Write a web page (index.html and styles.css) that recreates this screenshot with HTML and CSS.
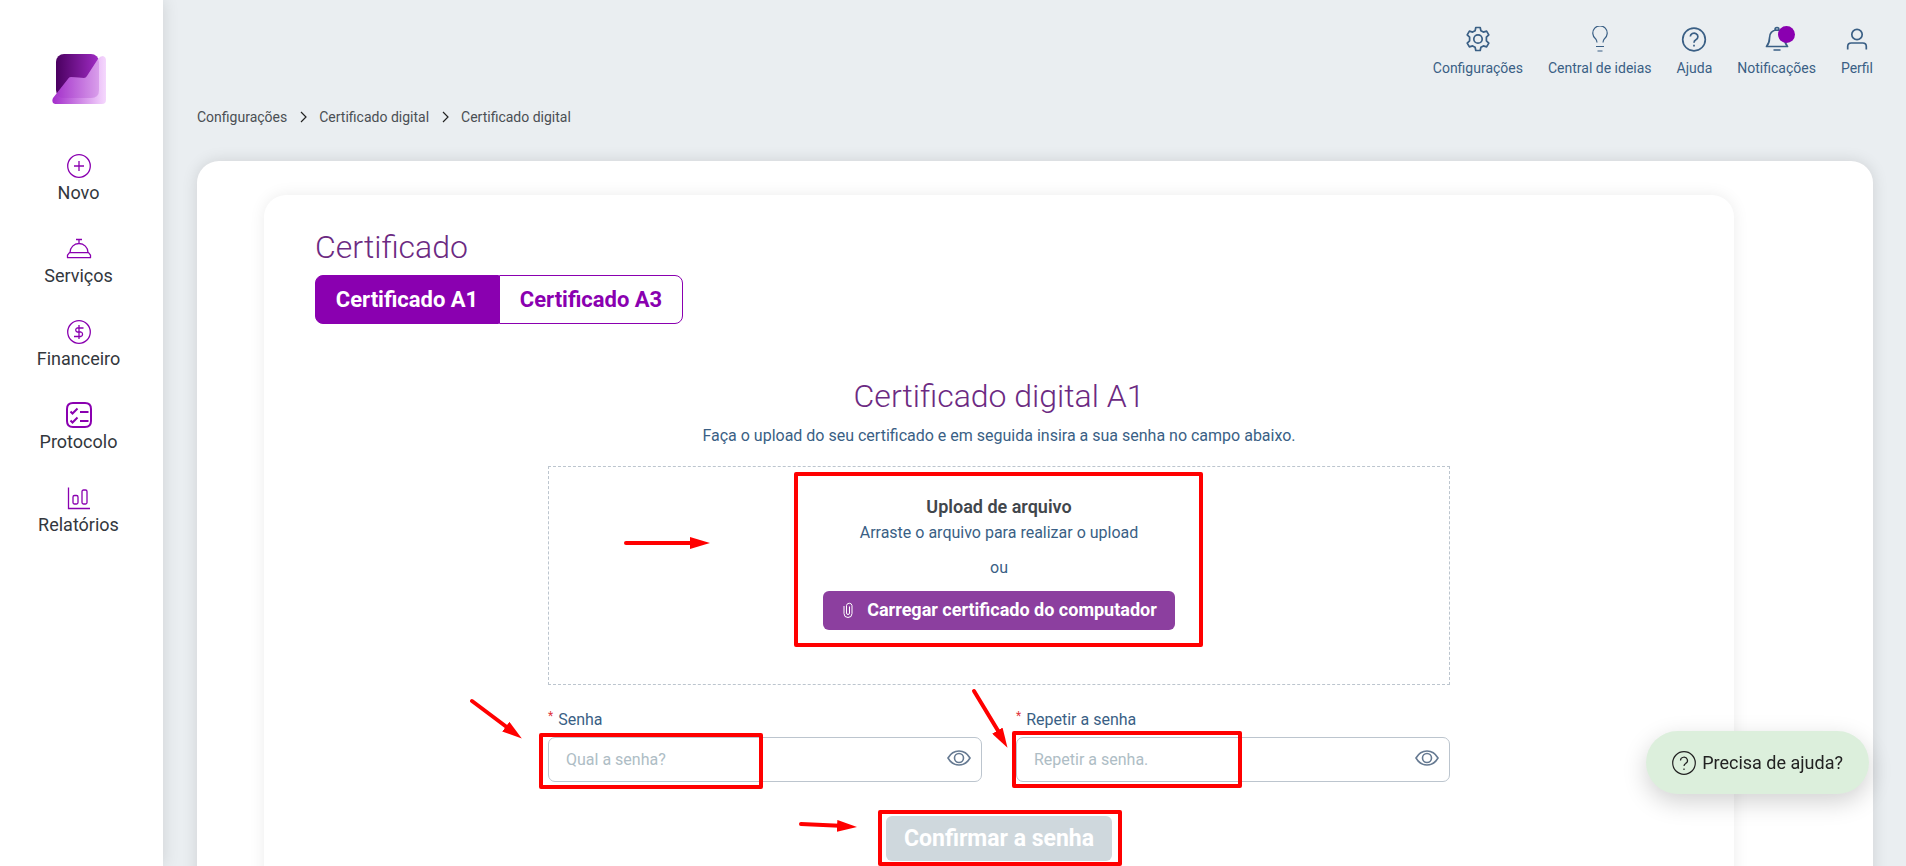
FILE: index.html
```html
<!DOCTYPE html>
<html lang="pt-BR">

<head>
    <meta charset="UTF-8" />
    <meta name="viewport" content="width=device-width, initial-scale=1" />
    <title>Certificado digital</title>
    <link rel="stylesheet" href="styles.css">
</head>

<body>
    <div class="app">

        <aside class="sidebar">
            <a href="#" class="logo" aria-label="Início">
                <svg width="54" height="50" viewBox="0 0 54 50">
                    <defs>
                        <linearGradient id="logoDark" x1="0" y1="0" x2="1" y2="0">
                            <stop offset="0" stop-color="#4a0060" />
                            <stop offset="1" stop-color="#a02cc4" />
                        </linearGradient>
                        <linearGradient id="logoLight" x1="0" y1="0" x2="1" y2="0">
                            <stop offset="0" stop-color="#a32ccb" />
                            <stop offset="0.9" stop-color="#efc9fa" />
                            <stop offset="1" stop-color="#f5d8fd" />
                        </linearGradient>
                    </defs>
                    <rect x="4" y="0" width="43" height="44" rx="8" fill="url(#logoDark)" />
                    <path d="M1 44 L16 25 Q17 23 19 23 L32 24 Q34 24 35 22 L46 5 Q48 2 51 2 Q54 3 54 6 V46 Q54 50 50 50 H3 Q-1 49 1 44Z" fill="url(#logoLight)" />
                    <path d="M5 39 L16 25 Q17 23 19 23 L32 24 Q34 24 35 22 L46 5 L47 8 V36 Q47 44 39 44 H12 Q6 44 5 39Z" fill="#a030c4" opacity="0.25" />
                </svg>
            </a>
            <nav class="menu">
                <a href="#novo">
                    <svg width="26" height="26" viewBox="0 0 26 26">
                        <circle cx="13" cy="13" r="11.3" />
                        <path d="M13 8v10M8 13h10" />
                    </svg>
                    <span>Novo</span>
                </a>
                <a href="#servicos">
                    <svg width="26" height="26" viewBox="0 0 26 26">
                        <path d="M10 3.500h6M13 3.500v4M4 16.500a9 9 0 0 1 18 0" />
                        <path d="M3.500 16.700h19l2 2.500v2.500h-23v-2.500z" stroke-linejoin="round" />
                    </svg>
                    <span>Serviços</span>
                </a>
                <a href="#financeiro">
                    <svg width="26" height="26" viewBox="0 0 26 26">
                        <circle cx="13" cy="13" r="11.3" />
                        <path d="M13 6v14M17.500 9h-6.500a2.200 2.200 0 0 0 0 4h4a2.400 2.400 0 0 1 0 4.500h-7" />
                    </svg>
                    <span>Financeiro</span>
                </a>
                <a href="#protocolo">
                    <svg width="26" height="26" viewBox="0 0 26 26" class="bold">
                        <path d="M7 1h12q6 0 6 6v12q0 6-6 6h-12q-6 0-6-6v-12q0-6 6-6z" />
                        <path d="M4.500 9.500l2 2 5-5M4.500 18.500l2 2 5-5M14 10h8.500M14 19h8.500" />
                    </svg>
                    <span>Protocolo</span>
                </a>
                <a href="#relatorios">
                    <svg width="26" height="26" viewBox="0 0 26 26">
                        <path d="M2.500 2.500v21h21.500" />
                        <rect x="7" y="10.500" width="5" height="8.500" rx="1.500" />
                        <rect x="16" y="5" width="5" height="14" rx="1.500" />
                    </svg>
                    <span>Relatórios</span>
                </a>
            </nav>
        </aside>

        <main class="main">
            <header class="topbar">
                <a href="#config">
                    <svg width="26" height="26" viewBox="0 0 26 26">
                        <path d="M10.800 1.500h4.400l.7 3.200 2.500 1.400 3.200-1 2.200 3.800-2.400 2.300v3.600l2.400 2.300-2.200 3.800-3.200-1-2.500 1.400-.7 3.200h-4.400l-.7-3.200-2.500-1.400-3.200 1-2.200-3.800 2.400-2.300v-3.600l-2.400-2.300 2.200-3.800 3.200 1 2.500-1.400z" stroke-linejoin="round" />
                        <circle cx="13" cy="13" r="4.200" />
                    </svg>
                    <span>Configurações</span>
                </a>
                <a href="#ideias">
                    <svg width="26" height="26" viewBox="0 0 26 26" class="thin">
                        <path d="M10 16.500q0-2-1.500-3.800a7.200 7.200 0 1 1 9 0q-1.500 1.800-1.500 3.800M9 20.500h8M10.500 25h5" />
                    </svg>
                    <span>Central de ideias</span>
                </a>
                <a href="#ajuda">
                    <svg width="26" height="26" viewBox="0 0 26 26">
                        <circle cx="13" cy="13.500" r="11.300" />
                        <path d="M9.300 10.500a3.800 3.500 0 1 1 5.600 3.200q-1.900 1-1.900 3M13 18.700v1.800" />
                    </svg>
                    <span>Ajuda</span>
                </a>
                <a href="#notificacoes" class="bell">
                    <svg width="26" height="26" viewBox="0 0 26 26">
                        <path d="M2.500 20.500q3-3.500 3-8.500 0-7.500 7.500-8 7.500.5 7.500 8 0 5 3 8.500zM9.500 24h7M11 4q0-2.500 2-2.500t2 2.500" stroke-linejoin="round" />
                    </svg>
                    <i class="dot"></i>
                    <span>Notificações</span>
                </a>
                <a href="#perfil">
                    <svg width="26" height="26" viewBox="0 0 26 26">
                        <circle cx="13" cy="8.500" r="5.200" />
                        <path d="M3.700 23.500v-3q0-3.500 3.500-3.500h11.600q3.500 0 3.500 3.500v3" />
                    </svg>
                    <span>Perfil</span>
                </a>
            </header>

            <nav class="breadcrumb">
                <a href="#config">Configurações</a>
                <svg width="8" height="12" viewBox="0 0 8 12"><path d="M2 1l5 5-5 5" /></svg>
                <a href="#certificado">Certificado digital</a>
                <svg width="8" height="12" viewBox="0 0 8 12"><path d="M2 1l5 5-5 5" /></svg>
                <span>Certificado digital</span>
            </nav>

            <div class="card">
                <section class="panel">
                    <h1>Certificado</h1>
                    <div class="tabs">
                        <button type="button" class="active">Certificado A1</button>
                        <button type="button">Certificado A3</button>
                    </div>

                    <h2>Certificado digital A1</h2>
                    <p class="intro">Faça o upload do seu certificado e em seguida insira a sua senha no campo abaixo.</p>

                    <form class="form">
                        <div class="dropzone">
                            <strong>Upload de arquivo</strong>
                            <p>Arraste o arquivo para realizar o upload</p>
                            <p class="or">ou</p>
                            <button type="button" class="upload">
                                <svg width="10" height="16" viewBox="0 0 10 16"><path d="M1 4v7.500a4 4 0 0 0 8 0v-8a2.800 2.800 0 0 0-5.500 0v7.500a1.500 1.500 0 0 0 3 0v-6.500" /></svg>
                                Carregar certificado do computador
                            </button>
                        </div>

                        <div class="fields">
                            <div class="field">
                                <label for="senha"><sup>*</sup>Senha</label>
                                <div class="input">
                                    <input type="password" id="senha" placeholder="Qual a senha?">
                                    <button type="button" aria-label="Mostrar senha">
                                        <svg width="24" height="18" viewBox="0 0 24 18"><path d="M1 9Q5 2 12 2t11 7q-4 7-11 7T1 9z" /><circle cx="12" cy="9" r="4.500" /></svg>
                                    </button>
                                </div>
                            </div>
                            <div class="field">
                                <label for="repetir"><sup>*</sup>Repetir a senha</label>
                                <div class="input">
                                    <input type="password" id="repetir" placeholder="Repetir a senha.">
                                    <button type="button" aria-label="Mostrar senha">
                                        <svg width="24" height="18" viewBox="0 0 24 18"><path d="M1 9Q5 2 12 2t11 7q-4 7-11 7T1 9z" /><circle cx="12" cy="9" r="4.500" /></svg>
                                    </button>
                                </div>
                            </div>
                        </div>

                        <button type="submit" class="confirm" disabled>Confirmar a senha</button>

                        <!-- tutorial marks over the form -->
                        <svg class="marks" width="902" height="400" viewBox="0 0 902 400">
                            <defs>
                                <marker id="head" markerUnits="userSpaceOnUse" markerWidth="20" markerHeight="12" refX="19" refY="6" orient="auto">
                                    <path d="M0 0L20 6L0 12z" fill="#f00" />
                                </marker>
                            </defs>
                            <g class="boxes">
                                <rect x="248" y="8" width="405" height="171" />
                                <rect x="-7" y="269" width="220" height="52" />
                                <rect x="466" y="267" width="226" height="53" />
                                <rect x="332" y="346" width="240" height="52" />
                            </g>
                            <g class="lines">
                                <path d="M78 77h68" />
                                <path d="M-76 235l36 27" />
                                <path d="M426 225l26 43" />
                                <path d="M253 358l44 2" />
                            </g>
                            <g class="heads">
                                <path d="M142 77h19" marker-end="url(#head)" />
                                <path d="M-43 260l16 12" marker-end="url(#head)" />
                                <path d="M449 264l10 17" marker-end="url(#head)" />
                                <path d="M290 360l18 1" marker-end="url(#head)" />
                            </g>
                        </svg>
                    </form>
                </section>
            </div>
        </main>

        <button type="button" class="help">
            <svg width="24" height="24" viewBox="0 0 24 24">
                <circle cx="12" cy="12" r="11.300" />
                <path d="M8.500 9.500a3.500 3.300 0 1 1 5.200 2.900q-1.700 1-1.700 2.600M12 17.500v1.500" />
            </svg>
            Precisa de ajuda?
        </button>
    </div>
</body>

</html>
```
FILE: styles.css
```css
:root {
    --purple: #8a00b0;
    --title: #6c2a82;
    --blue: #3a5f85;
    --text: #33373d;
    --bg: #eaeef1;
    --border: #bcc5ce;
    --red: #f00;
}

* {
    box-sizing: border-box;
}

body {
    margin: 0;
    font-family: Roboto, sans-serif;
    font-size: 16px;
    color: var(--text);
    background: var(--bg);
}

a {
    color: inherit;
    text-decoration: none;
}

button,
input {
    font-family: inherit;
}

svg {
    display: block;
    fill: none;
    flex-shrink: 0;
}

h1,
h2,
p {
    margin: 0;
}

.app {
    display: flex;
    height: 100vh;
    overflow: hidden;
}

/* sidebar */
.sidebar {
    width: 163px;
    flex-shrink: 0;
    padding: 54px 6px 0 0;
    background: #fff;
    box-shadow: 0 0 16px rgba(0, 0, 0, 0.12);
    display: flex;
    flex-direction: column;
    align-items: center;
}

.menu {
    margin-top: 49px;
    display: flex;
    flex-direction: column;
    gap: 31px;
}

.menu a {
    display: flex;
    flex-direction: column;
    align-items: center;
    gap: 2px;
    font-size: 18px;
    line-height: 24px;
}

.menu svg {
    stroke: var(--purple);
    stroke-width: 1.3;
}

.menu .bold {
    stroke-width: 2;
}

/* top */
.main {
    flex: 1;
    min-width: 0;
    padding: 0 33px 0 34px;
    display: flex;
    flex-direction: column;
}

.topbar {
    display: flex;
    justify-content: flex-end;
    gap: 25px;
    padding-top: 26px;
}

.topbar a {
    position: relative;
    display: flex;
    flex-direction: column;
    align-items: center;
    gap: 8px;
    font-size: 14px;
    line-height: 16px;
    color: var(--blue);
}

.topbar svg {
    stroke: var(--blue);
    stroke-width: 1.7;
}

.topbar .thin {
    stroke-width: 1.2;
}

.dot {
    position: absolute;
    top: 0;
    left: 41px;
    width: 17px;
    height: 17px;
    border-radius: 50%;
    background: var(--purple);
}

.breadcrumb {
    display: flex;
    align-items: center;
    gap: 12px;
    margin-top: 33px;
    font-size: 14px;
    line-height: 16px;
    color: #4a4f54;
}

.breadcrumb svg {
    stroke: #222;
    stroke-width: 1.2;
}

/* cards */
.card {
    flex: 1;
    margin-top: 36px;
    padding: 34px 139px 0 67px;
    background: #fff;
    border-radius: 22px 22px 0 0;
    box-shadow: 0 0 16px rgba(0, 0, 0, 0.12);
}

.panel {
    padding: 32px 51px 40px;
    background: #fff;
    border-radius: 22px;
    box-shadow: 0 0 16px rgba(0, 0, 0, 0.08);
}

h1,
h2 {
    font-size: 32px;
    line-height: 40px;
    font-weight: 300;
    color: var(--title);
}

h2 {
    margin-top: 52px;
    text-align: center;
}

.tabs {
    display: inline-flex;
    margin-top: 8px;
}

.tabs button {
    min-width: 184px;
    height: 49px;
    padding: 0 18px;
    font-size: 22px;
    font-weight: 700;
    color: var(--purple);
    background: #fff;
    border: 1px solid var(--purple);
    border-radius: 0 8px 8px 0;
}

.tabs .active {
    color: #fff;
    background: var(--purple);
    border-radius: 8px 0 0 8px;
}

.intro {
    margin-top: 8px;
    line-height: 24px;
    text-align: center;
    color: var(--blue);
}

/* form */
.form {
    position: relative;
    max-width: 902px;
    margin: 18px auto 0;
    color: var(--blue);
}

.dropzone {
    height: 219px;
    padding-top: 28px;
    border: 1px dashed var(--border);
    display: flex;
    flex-direction: column;
    align-items: center;
    line-height: 24px;
}

.dropzone strong {
    font-size: 18px;
    font-weight: 600;
    color: #41464c;
}

.dropzone p {
    margin-top: 2px;
}

.dropzone .or {
    margin-top: 11px;
}

.upload {
    display: flex;
    align-items: center;
    gap: 14px;
    height: 39px;
    margin-top: 11px;
    padding: 0 18px 2px 20px;
    font-size: 18px;
    font-weight: 700;
    color: #fff;
    background: #8c3f9f;
    border: none;
    border-radius: 6px;
}

.upload svg {
    stroke: #fff;
}

.fields {
    display: flex;
    gap: 34px;
    margin-top: 23px;
}

.field {
    flex: 1;
}

.field label {
    display: flex;
    gap: 5px;
    line-height: 24px;
}

.field sup {
    font-size: 12px;
    line-height: 16px;
    color: #e0343c;
}

.input {
    display: flex;
    align-items: center;
    height: 45px;
    margin-top: 5px;
    padding: 0 10px 0 17px;
    border: 1px solid var(--border);
    border-radius: 7px;
}

.input input {
    flex: 1;
    min-width: 0;
    padding: 0;
    font-size: 16px;
    color: var(--text);
    background: none;
    border: none;
    outline: none;
}

.input input::placeholder {
    color: #aebdc5;
}

.input button {
    padding: 0 0 3px;
    background: none;
    border: none;
}

.input svg {
    stroke: #667a92;
    stroke-width: 1.6;
}

.confirm {
    display: block;
    min-width: 224px;
    height: 45px;
    margin: 34px auto 0;
    padding: 0 18px;
    font-size: 23px;
    font-weight: 700;
    color: #fff;
    background: #cfd8dd;
    border: none;
    border-radius: 6px;
}

.marks {
    position: absolute;
    top: 0;
    left: 0;
    overflow: visible;
    pointer-events: none;
}

.boxes,
.lines {
    stroke: var(--red);
    stroke-width: 4;
    stroke-linejoin: round;
    stroke-linecap: round;
}

/* floating help */
.help {
    position: fixed;
    right: 37px;
    bottom: 72px;
    display: flex;
    align-items: center;
    gap: 6px;
    height: 63px;
    padding: 0 26px;
    font-size: 18px;
    color: #222;
    background: #dcefdc;
    border: none;
    border-radius: 32px;
    box-shadow: 0 8px 24px rgba(0, 0, 0, 0.18);
}

.help svg {
    stroke: #222;
    stroke-width: 1.2;
}
```
